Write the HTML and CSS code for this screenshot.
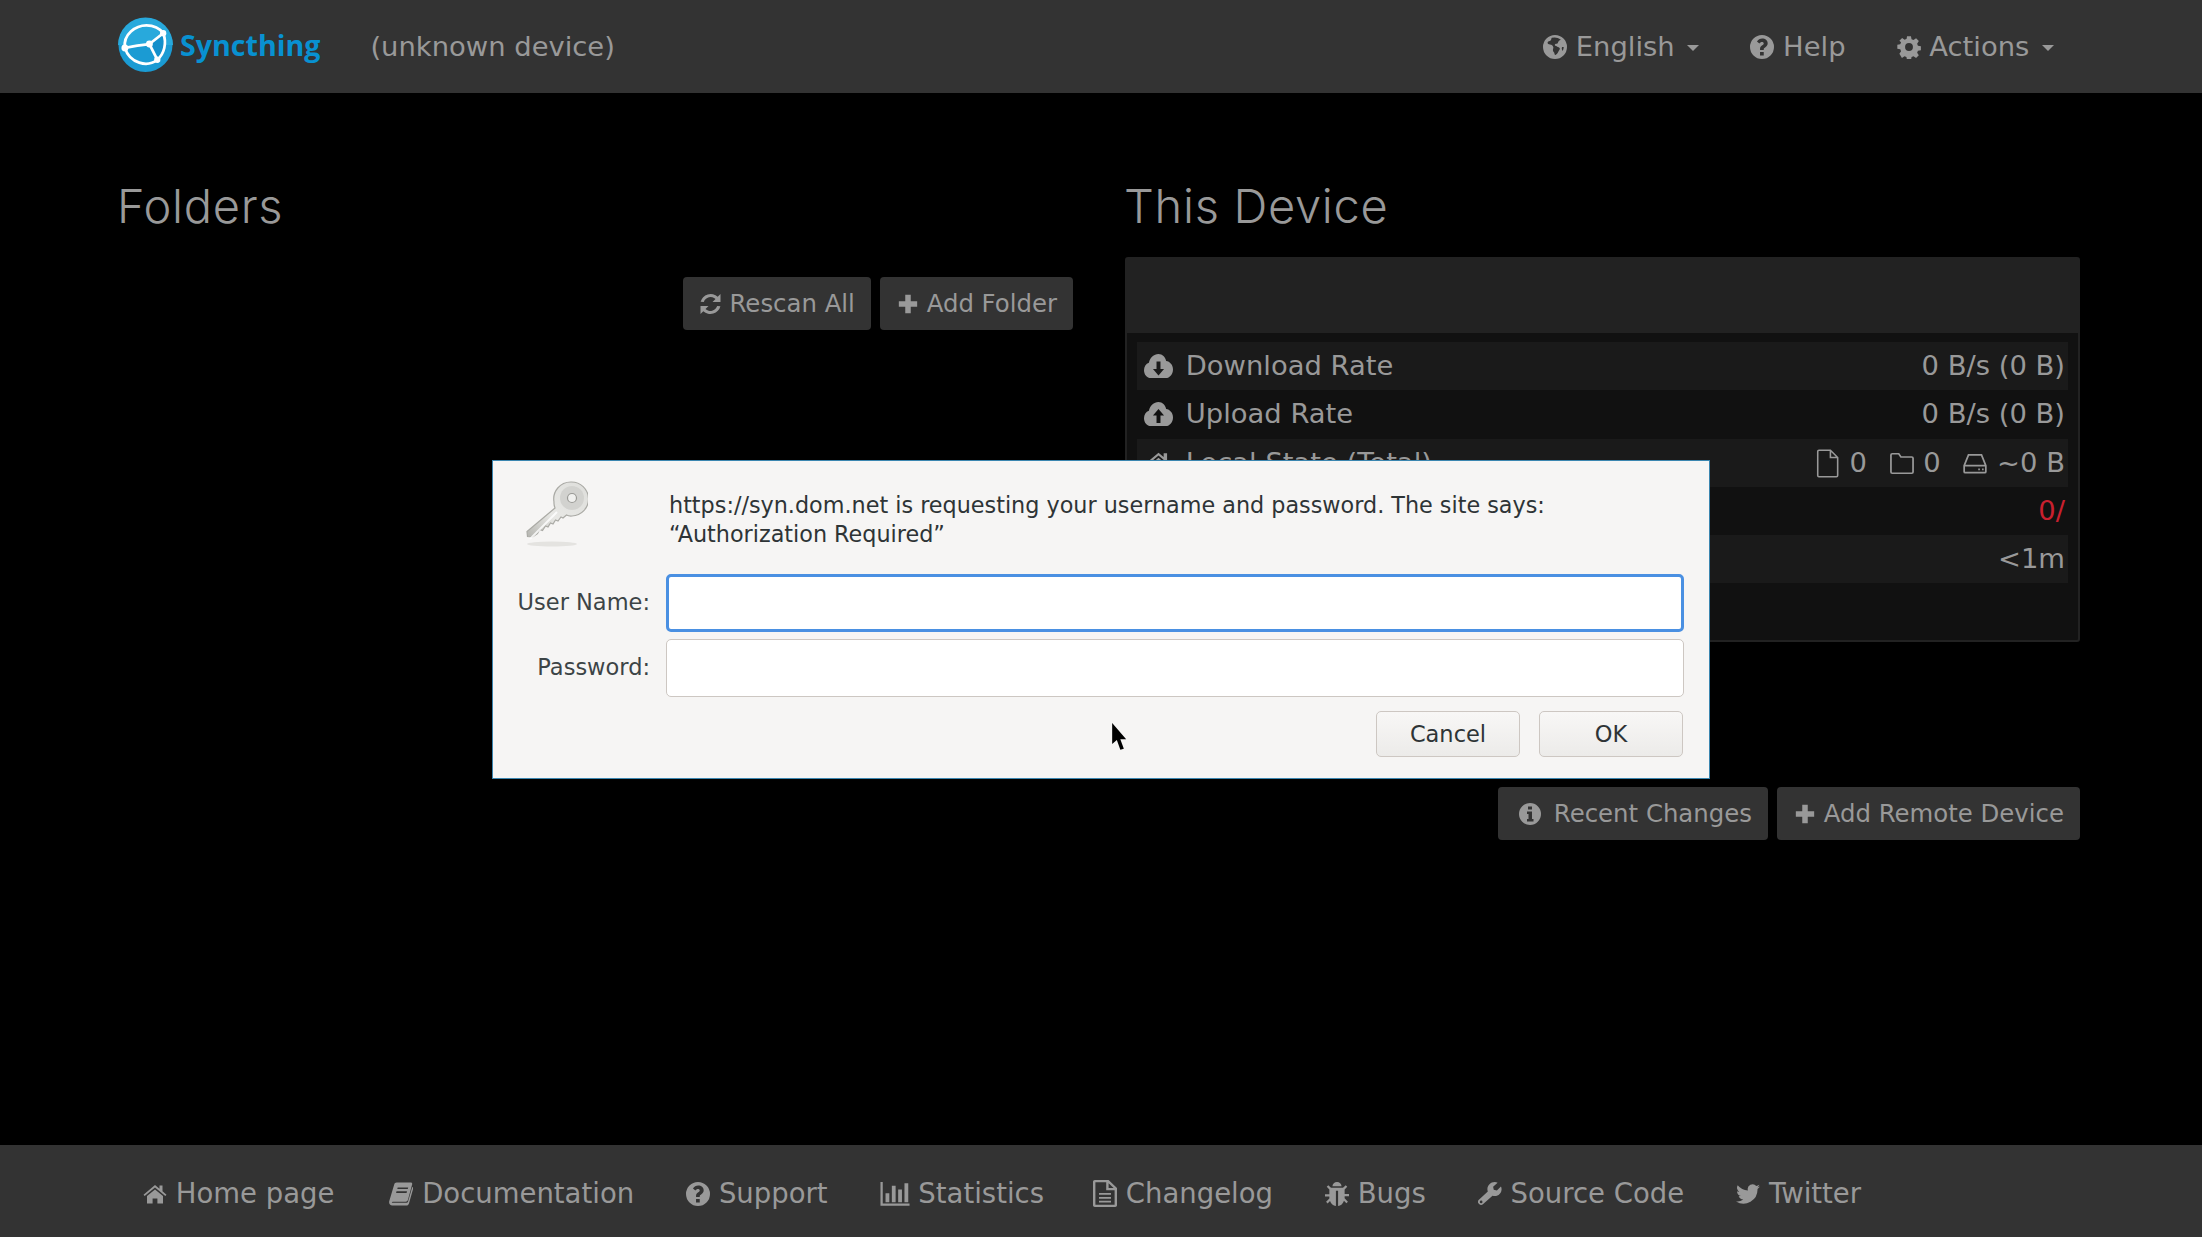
FILE: index.html
```html
<!DOCTYPE html>
<html lang="en">
<head>
    <meta charset="UTF-8">
    <meta name="viewport" content="width=device-width, initial-scale=1.0">
    <title>Syncthing</title>
    <link rel="stylesheet" href="styles.css">
</head>
<body>
    <svg class="defs" width="0" height="0">
        <defs>
            <symbol id="i-globe" viewBox="1 1 22 22"><path fill-rule="evenodd" d="M12 1a11 11 0 1 0 0 22 11 11 0 0 0 0-22zM9 3.600c-.6 1-.2 1.700-1 2.400-.9.800-2.600.500-2.800 1.800-.2 1.200 1 1.600 2.200 1.800 1.700.3 2.500 1 3 2.300.4 1-.4 1.900-.3 3 .1 1.300 1.200 1.700 1.400 3 .1.800.5 1.800 1.300 1.300 1.800-1.100 2.200-3.400 3.300-4.700.7-.9.300-1.900-.8-2.200-1-.3-1.300-1.200-2.400-1.300-.8 0-1.300-.5-1-1.300.4-1 1.500-.5 2.300-.9.800-.5.400-1.600 1.300-2.300.6-.5 1.400-.6 1.700-1.300A9.300 9.300 0 0 0 9 3.600zM18.500 12c-.6 1-.2 2.700.6 3.600.5-1 .8-2.300.9-3.600z"/></symbol>
            <symbol id="i-help" viewBox="1 1 22 22"><path fill-rule="evenodd" d="M12 1a11 11 0 1 0 0 22 11 11 0 0 0 0-22zM10.200 16.500h3.400v3.300h-3.400zM12.200 4.300c2.800 0 5 1.700 5 4.300 0 2.100-1.200 3-2.400 3.800-.8.500-1.200.9-1.200 1.900v.4h-3.400v-.8c0-1.800.8-2.700 2-3.500.8-.6 1.400-1 1.400-1.700 0-.8-.7-1.300-1.600-1.300-1 0-1.700.5-2.400 1.400L7.400 7c1.100-1.700 2.800-2.700 4.800-2.700z"/></symbol>
            <symbol id="i-cog" viewBox="1 1 22 22"><path fill-rule="evenodd" d="M10 1h4l.6 3 2 .9 2.600-1.700 2.800 2.800-1.700 2.600.8 2 3 .6v4l-3 .6-.8 2 1.700 2.600-2.800 2.800-2.600-1.700-2 .8-.6 3h-4l-.6-3-2-.8-2.600 1.700L2.200 19l1.700-2.600-.8-2-3-.6v-4l3-.6.8-2L2.200 5.600 5 2.800l2.600 1.700 2-.9zM12 8a4 4 0 1 0 0 8 4 4 0 0 0 0-8z" transform="translate(1.200 1.200) scale(.9)"/></symbol>
            <symbol id="i-refresh" viewBox="2 1 21 22"><path d="M22 2v8h-8l3-3a7.200 7.200 0 0 0-11.700 2.900l-3.200-.1A10.300 10.300 0 0 1 19.200 4.800zM2 22v-8h8l-3 3a7.200 7.200 0 0 0 11.700-2.900l3.200.1A10.300 10.300 0 0 1 4.800 19.200z"/></symbol>
            <symbol id="i-plus" viewBox="0 0 24 24"><path d="M9 2h6v7h7v6h-7v7H9v-7H2V9h7z"/></symbol>
            <symbol id="i-cloud-down" viewBox="1 3 22 16" preserveAspectRatio="none"><path fill-rule="evenodd" d="M12 3c3 0 5.200 2 5.800 4.700C20.600 8 23 10.200 23 13.300c0 3.200-2.400 5.700-5.500 5.700H6.200C3.300 19 1 16.700 1 13.800c0-2.400 1.500-4.300 3.700-5C5.500 5.500 8.400 3 12 3zM10.500 8v5H7.800l4.200 4.400 4.200-4.400h-2.700V8z"/></symbol>
            <symbol id="i-cloud-up" viewBox="1 3 22 16" preserveAspectRatio="none"><path fill-rule="evenodd" d="M12 3c3 0 5.200 2 5.800 4.700C20.600 8 23 10.200 23 13.300c0 3.200-2.400 5.700-5.500 5.700H6.200C3.300 19 1 16.700 1 13.800c0-2.400 1.500-4.300 3.700-5C5.500 5.500 8.400 3 12 3zM12 7.600L7.800 12h2.700v5h3v-5h2.700z"/></symbol>
            <symbol id="i-home" viewBox="0 2 24 21"><path d="M12 3.500l4.500 3.800V4h3v5.800l4 3.400-1.200 1.400L12 6 1.700 14.600.5 13.200zM12 8l8 6.600V22h-5.600v-5H9.600v5H4v-7.400z"/></symbol>
            <symbol id="i-book" viewBox="1 2 22 21"><path fill-rule="evenodd" d="M8 2h13c1 0 1.500.8 1.200 1.800l-3.800 14c-.3 1.200-1 1.700-2.200 1.700H4.500c-1 0-1.200.9-.4 1h12.700c.8 0 1.400-.4 1.600-1L22.300 6c.8.300 1 1 .8 1.800l-3.800 13.300c-.3 1-1.200 1.900-2.400 1.900H4c-2 0-3.300-1.900-2.800-3.800L5.700 4C6 2.800 6.900 2 8 2zM9 6.500l-.4 1.500h9.600l.4-1.500zM7.900 10l-.4 1.500h9.600l.4-1.500z"/></symbol>
            <symbol id="i-bars" viewBox="1 3 23 19"><path d="M1 3h1.800v17H24v1.800H1zM5 12h3v7H5zM10 6h3v13h-3zM15 9h3v10h-3zM20 4h3v15h-3z"/></symbol>
            <symbol id="i-log" viewBox="2 0 20 24" preserveAspectRatio="none"><path fill-rule="evenodd" d="M3.500 0h11.500l7 7v15.500c0 .8-.7 1.500-1.500 1.500h-17c-.8 0-1.500-.7-1.500-1.500V1.500C2 .7 2.700 0 3.500 0zM4 2v20h16V9h-7V2zM15 2.800V7h4.200zM7 11.500h10v1.600H7zM7 15h10v1.600H7zM7 18.500h10v1.600H7z"/></symbol>
            <symbol id="i-bug" viewBox="1 1 22 22"><path d="M12 1c2.400 0 4 1.500 4.200 3.800H7.800C8 2.500 9.600 1 12 1zM6.500 6.300h11l2.500-2.300 1.400 1.400L19 7.800v4.200h4v2h-4v2l3 3-1.400 1.400-2.200-2.200C17.400 20.800 15.500 23 13 23V9h-2v14c-2.500 0-4.400-2.200-5.400-4.600l-2.200 2.200L2 19.200l3-3v-2H1v-2h4V7.800L2.600 5.400 4 4z"/></symbol>
            <symbol id="i-wrench" viewBox="1 1 23 23"><path fill-rule="evenodd" d="M17 1c1 0 2 .2 2.800.7L15.500 5.500l.6 3 3 .7 3.900-3.900c.4.800.6 1.700.6 2.700 0 3.600-2.900 6.500-6.500 6.500-.8 0-1.500-.1-2.200-.4L5.700 22.400c-.9.900-2.500.9-3.400 0l-.7-.7c-.9-.9-.9-2.500 0-3.400L10.400 10c-.3-.6-.4-1.300-.4-2 0-3.900 3.100-7 7-7zM4 18.800a1.300 1.300 0 1 0 0 2.600 1.300 1.300 0 0 0 0-2.600z"/></symbol>
            <symbol id="i-twitter" viewBox="0 2 24 20"><path d="M24 4.600c-.9.400-1.800.7-2.800.8 1-.6 1.800-1.600 2.200-2.700-1 .6-2 1-3.100 1.200A4.900 4.900 0 0 0 11.900 8.400 14 14 0 0 1 1.700 3.200a4.900 4.900 0 0 0 1.500 6.600c-.8 0-1.600-.2-2.200-.6 0 2.400 1.700 4.400 3.900 4.800-.7.200-1.500.2-2.200.1.600 2 2.400 3.400 4.600 3.400A9.900 9.900 0 0 1 0 19.500 14 14 0 0 0 21.500 7.100c1-.7 1.800-1.500 2.500-2.500z"/></symbol>
            <symbol id="i-info" viewBox="1 1 22 22"><path fill-rule="evenodd" d="M12 1a11 11 0 1 0 0 22 11 11 0 0 0 0-22zM10 4.500h4v3h-4zM9 9.500h5v7.500h1.500v2.500h-6.500V17h1.500v-5H9z"/></symbol>
            <symbol id="i-file" viewBox="0 0 20 24"><path fill="none" stroke="currentColor" stroke-width="1.300" d="M2.500 1h9.500l6 6v15a1 1 0 0 1-1 1H2.500a1 1 0 0 1-1-1V2a1 1 0 0 1 1-1zM12 1v6h6"/></symbol>
            <symbol id="i-folder" viewBox="0 0 24 24"><path fill="none" stroke="currentColor" stroke-width="1.600" d="M3 3h6l2 3h10c.6 0 1.200.5 1.200 1.200v12.600c0 .6-.6 1.200-1.200 1.200H3c-.6 0-1.200-.6-1.200-1.200V4.200C1.800 3.500 2.400 3 3 3z"/></symbol>
            <symbol id="i-hdd" viewBox="0 0 24 24"><path fill="none" stroke="currentColor" stroke-width="1.600" d="M6 4h12l4 10v5.500c0 .6-.5 1-1 1H3c-.5 0-1-.4-1-1V14zM2 14h20M15 17.500h1.500M18.500 17.500H20"/></symbol>
        </defs>
    </svg>

    <header class="navbar">
        <div class="navbar-inner">
            <a class="brand">
                <svg class="logo" viewBox="0 0 56 56">
                    <circle cx="28" cy="28" r="27.500" fill="#1b9bd3"/>
                    <path d="M0 28a28 28 0 0 1 56 0z" fill="#28a9dc"/>
                    <path d="M32 27L46 16c3 9 1 20-6 27z" fill="#1590cb"/>
                    <g fill="none" stroke="#fff" stroke-width="2.800">
                        <path d="M7 31C5 17 18 8 29 8c7 0 14 3 17 8 4 10 1 21-6 27C30 51 12 47 7 31z"/>
                        <path d="M7 31Q20 28 32 27L46 16M32 27l8 16"/>
                    </g>
                    <g fill="#fff">
                        <circle cx="7" cy="31" r="3.500"/>
                        <circle cx="46" cy="16" r="3.200"/>
                        <circle cx="40" cy="43" r="3.200"/>
                        <circle cx="32" cy="27" r="3.500"/>
                    </g>
                </svg>
                <span class="brand-name">Syncthing</span>
            </a>
            <span class="device-name">(unknown device)</span>
            <nav class="nav-right">
                <a><svg class="icon"><use href="#i-globe"/></svg> English <span class="caret"></span></a>
                <a><svg class="icon"><use href="#i-help"/></svg> Help</a>
                <a><svg class="icon"><use href="#i-cog"/></svg> Actions <span class="caret"></span></a>
            </nav>
        </div>
    </header>

    <main class="container">
        <section class="column">
            <h3>Folders</h3>
            <div class="actions actions-folders">
                <button class="btn"><svg class="icon"><use href="#i-refresh"/></svg> Rescan All</button>
                <button class="btn"><svg class="icon"><use href="#i-plus"/></svg> Add Folder</button>
            </div>
        </section>
        <section class="column">
            <h3>This Device</h3>
            <div class="panel">
                <div class="panel-heading"></div>
                <div class="panel-body">
                    <div class="row row-odd">
                        <span class="row-label"><svg class="icon icon-cloud"><use href="#i-cloud-down"/></svg> Download Rate</span>
                        <span>0 B/s (0 B)</span>
                    </div>
                    <div class="row">
                        <span class="row-label"><svg class="icon icon-cloud"><use href="#i-cloud-up"/></svg> Upload Rate</span>
                        <span>0 B/s (0 B)</span>
                    </div>
                    <div class="row row-odd">
                        <span class="row-label"><svg class="icon icon-cloud"><use href="#i-home"/></svg> Local State (Total)</span>
                        <span class="stats">
                            <svg class="icon icon-thin"><use href="#i-file"/></svg> 0
                            <svg class="icon icon-thin stat-gap"><use href="#i-folder"/></svg> 0
                            <svg class="icon icon-thin stat-gap"><use href="#i-hdd"/></svg> ~0 B
                        </span>
                    </div>
                    <div class="row">
                        <span class="row-label"></span>
                        <span class="text-danger">0/</span>
                    </div>
                    <div class="row row-odd">
                        <span class="row-label"></span>
                        <span>&lt;1m</span>
                    </div>
                </div>
            </div>
            <div class="actions actions-device">
                <button class="btn"><svg class="icon icon-info"><use href="#i-info"/></svg> Recent Changes</button>
                <button class="btn"><svg class="icon"><use href="#i-plus"/></svg> Add Remote Device</button>
            </div>
        </section>
    </main>

    <footer class="footer">
        <a class="link-home"><svg class="icon"><use href="#i-home"/></svg> Home page</a>
        <a><svg class="icon"><use href="#i-book"/></svg> Documentation</a>
        <a><svg class="icon"><use href="#i-help"/></svg> Support</a>
        <a class="link-stats"><svg class="icon icon-wide"><use href="#i-bars"/></svg> Statistics</a>
        <a><svg class="icon icon-log"><use href="#i-log"/></svg> Changelog</a>
        <a><svg class="icon"><use href="#i-bug"/></svg> Bugs</a>
        <a><svg class="icon"><use href="#i-wrench"/></svg> Source Code</a>
        <a><svg class="icon"><use href="#i-twitter"/></svg> Twitter</a>
    </footer>

    <!-- browser auth window sits on top of the page -->
    <div class="auth-dialog">
        <div class="auth-top">
            <svg class="key" viewBox="0 0 66 66">
                <defs>
                    <linearGradient id="keygrad" x1="1" y1="0" x2="0" y2="1">
                        <stop offset="0" stop-color="#dededb"/>
                        <stop offset=".6" stop-color="#e8e8e5"/>
                        <stop offset="1" stop-color="#b5b5b0"/>
                    </linearGradient>
                </defs>
                <ellipse cx="30" cy="63" rx="25" ry="2.500" fill="#e4e3e0"/>
                <path fill="url(#keygrad)" stroke="#aaaaa5" stroke-width="1.200" d="M49 1a17 17 0 0 1 1 34c-2 .2-4-.2-5.500-1L41 37l-2-1-3 4-2.500-1-2.500 4-2.500-1-2.500 4-2.500-1-3 4.500-3-1-2 4-5 3.500-5-.5-.5-5L33 27c-.8-2-1.200-4-1-6A17 17 0 0 1 49 1z"/>
                <circle cx="50" cy="17" r="12" fill="#d2d2cf"/>
                <circle cx="50" cy="17" r="4.500" fill="#f0f0ee" stroke="#9a9a96" stroke-width="1.200"/>
                <path fill="none" stroke="#fff" stroke-width="2" opacity=".8" d="M8 58l27-27"/>
            </svg>
            <p class="auth-text">https://syn.dom.net is requesting your username and password. The site says: “Authorization Required”</p>
        </div>
        <div class="auth-form">
            <label class="auth-label">User Name:</label>
            <input class="auth-input auth-input-focus" type="text">
            <label class="auth-label">Password:</label>
            <input class="auth-input" type="password">
        </div>
        <div class="auth-buttons">
            <button class="auth-btn">Cancel</button>
            <button class="auth-btn">OK</button>
        </div>
        <svg class="cursor" viewBox="0 0 12 24"><path d="M1 0v18l4-3.500L8 23l3-1-3-8h5z" fill="#000"/></svg>
    </div>
</body>
</html>
```
FILE: styles.css
```css
body {
    margin: 0;
    height: 1237px;
    overflow: hidden;
    display: flex;
    flex-direction: column;
    background-color: #000;
    color: #999;
    font-family: "DejaVu Sans", sans-serif;
    font-size: 27.400px;
    line-height: 40px;
}

.defs {
    position: absolute;
}

.icon {
    width: 24px;
    height: 24px;
    fill: currentColor;
    vertical-align: -3px;
}

.icon-thin {
    fill: none;
    width: 26px;
    height: 29px;
    vertical-align: -6px;
}

/* Navbar */
.navbar {
    height: 93px;
    flex-shrink: 0;
    background-color: #333;
}

.navbar-inner {
    display: flex;
    align-items: center;
    height: 93px;
    padding: 0 118px;
}

.brand {
    display: flex;
    align-items: center;
}

.logo {
    width: 55px;
    height: 56px;
    margin-top: -4px;
}

.brand-name {
    margin-left: 7px;
    font-family: "Open Sans", sans-serif;
    font-size: 28.600px;
    font-weight: 700;
    color: #0891d1;
    margin-top: -4px;
}

.device-name {
    margin-left: 50px;
    color: #999;
}

.nav-right {
    display: flex;
    gap: 51px;
    margin-left: auto;
    margin-right: 30px;
}

.caret {
    display: inline-block;
    width: 0;
    height: 0;
    margin-left: 4px;
    vertical-align: middle;
    border-top: 6px solid #999;
    border-left: 6px solid transparent;
    border-right: 6px solid transparent;
}

/* Content */
.container {
    flex: 1;
    display: flex;
    gap: 52px;
    padding: 0 122px 0 118px;
}

.column {
    flex: 1;
    min-width: 0;
}

h3 {
    margin: 0 0 0 -1px;
    padding-top: 85px;
    height: 79px;
    line-height: 56px;
    font-family: "Inter", sans-serif;
    font-size: 47px;
    font-weight: 300;
    letter-spacing: 0.700px;
    color: #999;
}

.actions {
    display: flex;
    justify-content: flex-end;
    gap: 9px;
}

.actions-folders {
    margin-top: 20px;
}

.actions-device {
    margin-top: 145px;
}

.btn {
    height: 53px;
    padding: 0 16px 0 17px;
    border: 0;
    border-radius: 4px;
    background-color: #333;
    color: #999;
    font-family: inherit;
    font-size: 24.400px;
    white-space: nowrap;
}

.btn .icon {
    width: 22px;
    height: 22px;
}

.btn .icon-info {
    margin: 0 5px 0 4px;
}

.panel {
    height: 385px;
    box-sizing: border-box;
    border: 2px solid #222;
    border-radius: 3px;
    background-color: #111;
}

.panel-heading {
    height: 74px;
    background-color: #222;
}

.panel-body {
    padding: 9px 10px;
}

.row {
    display: flex;
    justify-content: space-between;
    height: 48.300px;
    line-height: 47px;
    padding: 0 3px 0 6px;
    white-space: nowrap;
    background-color: #111;
}

.row-odd {
    background-color: #1a1a1a;
}

.row-label .icon-cloud {
    width: 29px;
    height: 24px;
    margin-left: 1px;
    margin-right: 4px;
    vertical-align: -3px;
}

.stat-gap {
    margin-left: 13px;
}

.text-danger {
    color: #c9202f;
}

/* Footer */
.footer {
    display: flex;
    align-items: center;
    gap: 52px;
    height: 89px;
    flex-shrink: 0;
    padding: 3px 143px 0;
    background-color: #333;
    color: #999;
    font-size: 27.500px;
}

.link-home {
    margin-right: 3px;
}

.link-stats {
    margin-right: -3px;
}

.footer .icon-wide {
    width: 30px;
}

.footer .icon-log {
    height: 27px;
    vertical-align: -4px;
}

/* Auth dialog */
.auth-dialog {
    position: absolute;
    left: 492px;
    top: 460px;
    width: 1218px;
    height: 319px;
    box-sizing: border-box;
    border: 1px solid #3b86b0;
    background-color: #f6f5f4;
    color: #2e3436;
    font-size: 22.500px;
    line-height: 29px;
}

.auth-top {
    display: flex;
    box-sizing: border-box;
    height: 113px;
    padding: 20px 20px 0 29px;
}

.key {
    width: 66px;
    height: 66px;
    flex-shrink: 0;
}

.auth-text {
    margin: 10px 0 0 81px;
    width: 1000px;
    font-size: 22.300px;
}

.auth-form {
    display: grid;
    grid-template-columns: 157px 1fr;
    column-gap: 16px;
    row-gap: 7px;
    padding-right: 25px;
    align-items: center;
}

.auth-label {
    text-align: right;
    color: #3c4446;
    margin-top: -2px;
}

.auth-input {
    height: 58px;
    box-sizing: border-box;
    border: 1px solid #cdc7c2;
    border-radius: 5px;
    background-color: #fff;
    outline: none;
}

.auth-input-focus {
    border: 3px solid #4a90e2;
}

.auth-buttons {
    display: flex;
    justify-content: flex-end;
    gap: 19px;
    margin-top: 14px;
    padding-right: 26px;
}

.auth-btn {
    width: 144px;
    height: 46px;
    border: 1px solid #cdc7c2;
    border-radius: 5px;
    background: linear-gradient(#f8f7f6, #ecebe9);
    color: #2e3436;
    font-family: inherit;
    font-size: 22.500px;
}

/* mouse pointer in the screenshot */
.cursor {
    position: absolute;
    left: 616px;
    top: 262px;
    width: 18px;
    height: 28px;
}
```
